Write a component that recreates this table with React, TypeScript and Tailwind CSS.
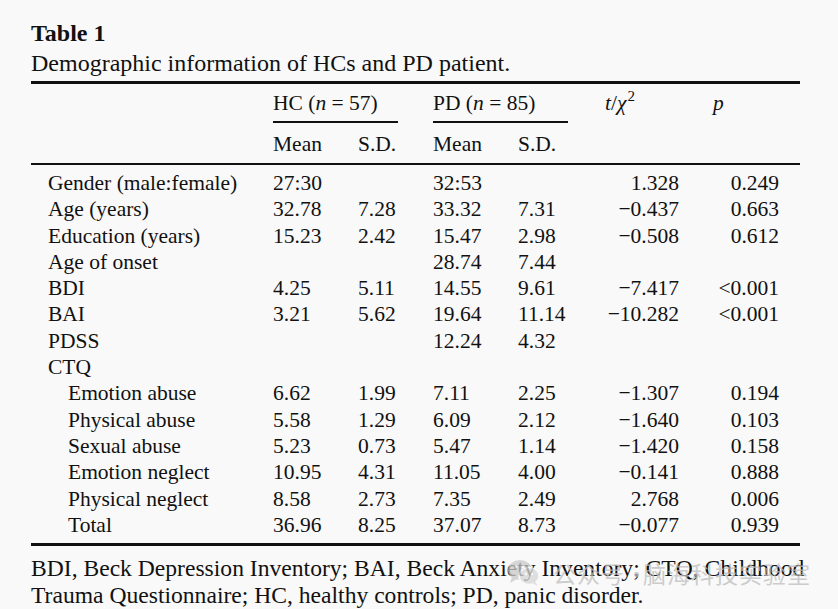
import React from "react";

type Row = { label: string; indent?: boolean; v: string[] };

const rows: Row[] = [
  { label: "Gender (male:female)", v: ["27:30", "", "32:53", "", "1.328", "0.249"] },
  { label: "Age (years)", v: ["32.78", "7.28", "33.32", "7.31", "−0.437", "0.663"] },
  { label: "Education (years)", v: ["15.23", "2.42", "15.47", "2.98", "−0.508", "0.612"] },
  { label: "Age of onset", v: ["", "", "28.74", "7.44", "", ""] },
  { label: "BDI", v: ["4.25", "5.11", "14.55", "9.61", "−7.417", "<0.001"] },
  { label: "BAI", v: ["3.21", "5.62", "19.64", "11.14", "−10.282", "<0.001"] },
  { label: "PDSS", v: ["", "", "12.24", "4.32", "", ""] },
  { label: "CTQ", v: ["", "", "", "", "", ""] },
  { label: "Emotion abuse", indent: true, v: ["6.62", "1.99", "7.11", "2.25", "−1.307", "0.194"] },
  { label: "Physical abuse", indent: true, v: ["5.58", "1.29", "6.09", "2.12", "−1.640", "0.103"] },
  { label: "Sexual abuse", indent: true, v: ["5.23", "0.73", "5.47", "1.14", "−1.420", "0.158"] },
  { label: "Emotion neglect", indent: true, v: ["10.95", "4.31", "11.05", "4.00", "−0.141", "0.888"] },
  { label: "Physical neglect", indent: true, v: ["8.58", "2.73", "7.35", "2.49", "2.768", "0.006"] },
  { label: "Total", indent: true, v: ["36.96", "8.25", "37.07", "8.73", "−0.077", "0.939"] },
];

const grid = "grid grid-cols-[242px_85px_75px_85px_62px_99px_100px]";

function WeChatIcon() {
  return (
    <svg width="34" height="28" viewBox="0 0 34 28">
      <ellipse cx="13" cy="11" rx="12" ry="10" fill="#c9c9c9" />
      <path d="M5 18 L3 24 L10 20 Z" fill="#c9c9c9" />
      <ellipse cx="22" cy="17" rx="10" ry="8.5" fill="#d6d6d6" stroke="#f9f9f9" strokeWidth="1.5" />
      <path d="M28 23 L31 27 L25 24 Z" fill="#d6d6d6" />
      <circle cx="9" cy="8" r="1.4" fill="#f9f9f9" />
      <circle cx="16" cy="8" r="1.4" fill="#f9f9f9" />
      <circle cx="19" cy="15" r="1.2" fill="#f9f9f9" />
      <circle cx="25" cy="15" r="1.2" fill="#f9f9f9" />
    </svg>
  );
}

export default function App() {
  return (
    <div
      className="relative w-[838px] h-[609px] bg-[#f9f9f9] text-[#111] overflow-hidden"
      style={{ fontFamily: '"Liberation Serif", "Times New Roman", serif' }}
    >
      <div className="pl-[31px] pt-[18px] w-[800px]">
        <div className="text-[24px] font-bold leading-[30px]">Table 1</div>
        <div className="text-[24px] leading-[30px]">Demographic information of HCs and PD patient.</div>
        <div className="mt-[3px] h-[2.5px] bg-[#111]" />
        {/* header */}
        <div className={`${grid} text-[21.5px] leading-[26px] pt-[6px]`}>
          <div />
          <div className="col-span-2">
            <div className="w-[125px] whitespace-nowrap">
              HC (<i>n</i> = 57)
            </div>
            <div className="w-[125px] h-[2px] bg-[#111] mt-[5px]" />
          </div>
          <div className="col-span-2">
            <div className="w-[135px] whitespace-nowrap">
              PD (<i>n</i> = 85)
            </div>
            <div className="w-[135px] h-[2px] bg-[#111] mt-[5px]" />
          </div>
          <div className="pl-[25px] whitespace-nowrap">
            <i>t</i>/<i>χ</i>
            <span className="text-[15px] relative top-[-9px] ml-[1px]">2</span>
          </div>
          <div className="pl-[34px]">
            <i>p</i>
          </div>
        </div>
        <div className={`${grid} text-[21.5px] leading-[26px] pt-[8px]`}>
          <div />
          <div>Mean</div>
          <div>S.D.</div>
          <div>Mean</div>
          <div>S.D.</div>
        </div>
        <div className="mt-[6px] h-[2.5px] bg-[#111]" />
        <div className="pt-[5px] pb-[5px] text-[21.5px]">
          {rows.map((r) => (
            <div key={r.label} className={`${grid} h-[26.3px] leading-[26.3px] whitespace-nowrap`}>
              <div className={r.indent ? "pl-[37px]" : "pl-[17px]"}>{r.label}</div>
              <div>{r.v[0]}</div>
              <div>{r.v[1]}</div>
              <div>{r.v[2]}</div>
              <div>{r.v[3]}</div>
              <div className="text-right">{r.v[4]}</div>
              <div className="text-right">{r.v[5]}</div>
            </div>
          ))}
        </div>
        <div className="h-[2.5px] bg-[#111]" />
        <div className="text-[23.6px] leading-[27px] pt-[9px] whitespace-nowrap">
          <div>BDI, Beck Depression Inventory; BAI, Beck Anxiety Inventory; CTQ, Childhood</div>
          <div>Trauma Questionnaire; HC, healthy controls; PD, panic disorder.</div>
        </div>
      </div>
      <div
        className="absolute left-[507px] top-[556px] flex items-center text-[23px] text-[#bdbdbd] opacity-75 pointer-events-none whitespace-nowrap"
        style={{ fontFamily: '"Noto Sans CJK SC", sans-serif' }}
      >
        <WeChatIcon />
        <span className="ml-[12px] tracking-[1px]">公众号</span>
        <span className="w-[18px] text-center">·</span>
        <span className="tracking-[1px]">脑海科技实验室</span>
      </div>
    </div>
  );
}
